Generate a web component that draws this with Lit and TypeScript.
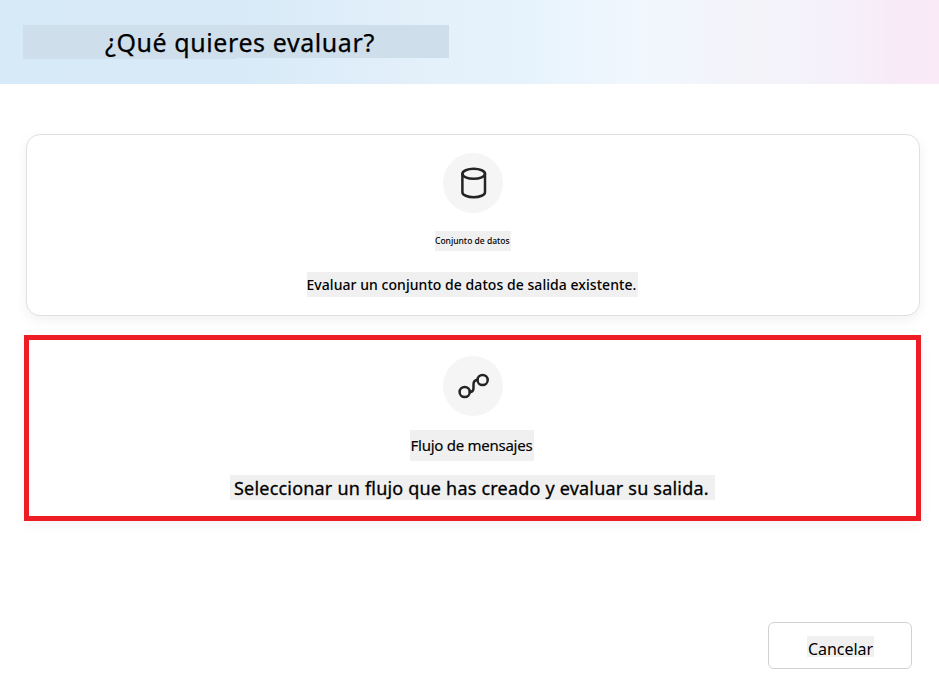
import { LitElement, html, css, svg } from "lit";
import { customElement, property } from "lit/decorators.js";

@customElement("option-icon")
class OptionIcon extends LitElement {
  @property() name = "";
  static styles = css`
    :host { display: block; width: 60px; height: 60px; border-radius: 50%; background: #f5f5f5; }
    svg { display: block; fill: none; stroke: #242424; stroke-width: 2.5; stroke-linecap: round; }
  `;
  render() {
    return html`<svg width="60" height="60" viewBox="0 0 60 60">
      ${this.name === "data"
        ? svg`<ellipse cx="30.7" cy="20.8" rx="11.3" ry="5"/><path d="M19.4 20.8V39.2C19.4 42 24.5 44.2 30.7 44.2S42 42 42 39.2V20.8"/>`
        : svg`<circle cx="21.7" cy="36" r="5.1"/><circle cx="39.6" cy="24" r="5.1"/><path d="M26.8 36C29.5 36 30.5 34.5 30.5 32V28.5C30.5 25.8 31.8 24 34.5 24"/>`}
    </svg>`;
  }
}

@customElement("app-root")
class AppRoot extends LitElement {
  static styles = css`
    :host {
      display: flex; flex-direction: column; box-sizing: border-box;
      width: 939px; height: 679px; overflow: hidden; background: #fff;
      color: #000; font-family: "Noto Sans", sans-serif; white-space: nowrap;
    }
    header {
      height: 84px; box-sizing: border-box; padding: 25px 0 0 23px; flex: none;
      background: linear-gradient(90deg, #d7eaf8 0, #d8eaf8 235px, #e4f0fa 430px, #e7f3fc 530px, #f1f7fe 640px, #f3f4fa 730px, #f5f0f9 850px, #f8eaf7 895px, #f9eaf6 939px);
    }
    h1, h2, p { margin: 0; font-weight: 400; }
    h1 {
      width: 426px; height: 34px; box-sizing: border-box; padding-left: 82px;
      font-size: 25px; line-height: 34px; letter-spacing: .58px; -webkit-text-stroke: .25px #000;
      background: linear-gradient(#cedeeb, #cedeeb) 0 0 / 426px 33px no-repeat,
        linear-gradient(#cedeeb, #cedeeb) 0 0 / 213px 34px no-repeat;
    }
    main { display: flex; flex-direction: column; padding: 50px 18px 0 24px; }
    .card {
      box-sizing: border-box; width: 894px; height: 182px; margin-left: 2px; padding-top: 18px;
      display: flex; flex-direction: column; align-items: center;
      border: 1px solid #e0e0e0; border-radius: 14px; background: #fff;
      box-shadow: 0 4px 12px rgba(0, 0, 0, .06);
    }
    .selected {
      box-sizing: border-box; width: 897px; height: 186px; margin-top: 19px; padding-top: 16px;
      display: flex; flex-direction: column; align-items: center;
      border: 5px solid #ee1c25; background: #fff; box-shadow: 0 4px 12px rgba(0, 0, 0, .05);
    }
    .mark { box-sizing: border-box; background: #f0f0f0; }
    .data-title { width: 76px; height: 20px; margin-top: 18px; font-size: 8.5px; line-height: 20px; font-weight: 500; }
    .data-text { width: 331px; height: 25px; margin: 21px 2px 0 0; font-size: 14px; line-height: 25px; font-weight: 500; letter-spacing: .05px; }
    .flow-title { width: 124px; height: 31px; margin: 14px 2px 0 0; padding-left: 1px; font-size: 15px; line-height: 31px; letter-spacing: -.26px; -webkit-text-stroke: .15px #000; }
    .flow-text { width: 485px; height: 25px; margin-top: 14px; padding-left: 4px; font-size: 18px; line-height: 26px; -webkit-text-stroke: .3px #000; letter-spacing: .2px; }
    footer { display: flex; justify-content: flex-end; padding: 101px 27px 0 0; }
    button {
      width: 144px; height: 47px; padding: 0; display: flex; justify-content: center; align-items: flex-start;
      border: 1px solid #d1d1d1; border-radius: 6px; background: #fff; color: inherit; font: 16px "Noto Sans", sans-serif;
    }
    button .mark { width: 67px; height: 21px; margin: 13px 0 0 1px; padding-left: 1px; line-height: 26px; text-align: left; letter-spacing: -.05px; }
  `;
  render() {
    return html`
      <header><h1><span>¿Qué quieres evaluar?</span></h1></header>
      <main>
        <section class="card">
          <option-icon name="data"></option-icon>
          <h2 class="mark data-title"><span>Conjunto de datos</span></h2>
          <p class="mark data-text"><span>Evaluar un conjunto de datos de salida existente.</span></p>
        </section>
        <section class="selected">
          <option-icon name="flow"></option-icon>
          <h2 class="mark flow-title"><span>Flujo de mensajes</span></h2>
          <p class="mark flow-text"><span>Seleccionar un flujo que has creado y evaluar su salida.</span></p>
        </section>
      </main>
      <footer><button><span class="mark">Cancelar</span></button></footer>
    `;
  }
}
